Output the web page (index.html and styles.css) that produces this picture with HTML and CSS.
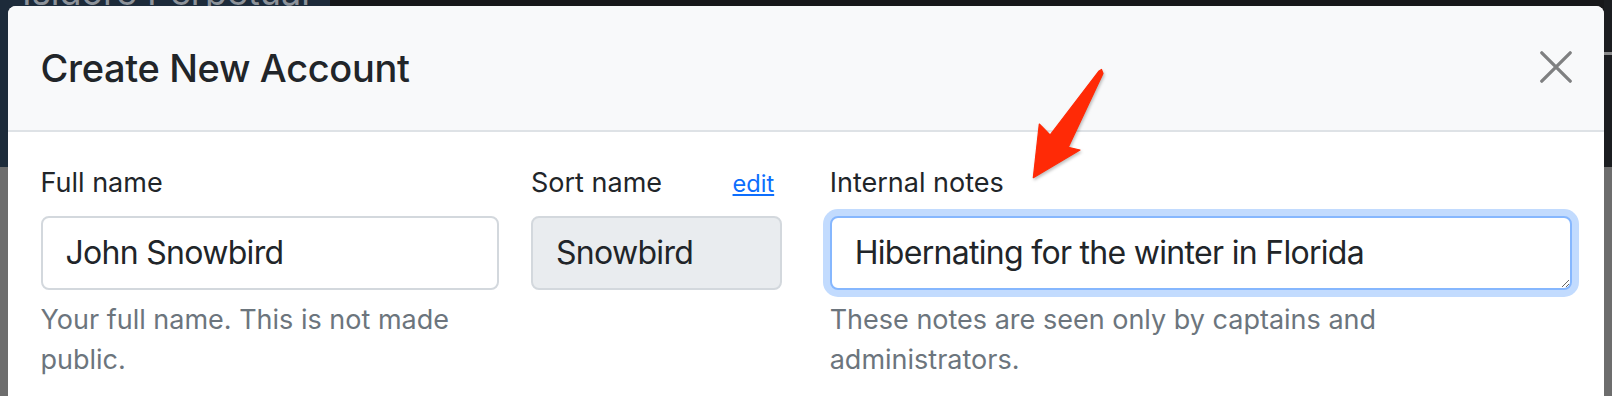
FILE: index.html
```html
<!DOCTYPE html>
<html lang="en">
<head>
<meta charset="utf-8">
<title>Create New Account</title>
<link rel="stylesheet" href="styles.css">
</head>
<body>
<div class="backdrop-text">Isidore Perpetual</div>
<div class="modal">
  <div class="modal-header">
    <h5 class="modal-title">Create New Account</h5>
    <button class="btn-close" type="button" aria-label="Close">
      <svg width="32" height="32" viewBox="0 0 32 32"><path d="M1.8 1.8 L30.2 30.2 M30.2 1.8 L1.8 30.2" stroke="#7f8081" stroke-width="3.3" stroke-linecap="round" fill="none"/></svg>
    </button>
  </div>
  <div class="modal-body">
    <div class="form-row">
      <div class="field">
        <label class="form-label" for="fullname">Full name</label>
        <input class="form-control" id="fullname" type="text" value="John Snowbird">
        <div class="form-text">Your full name. This is not made public.</div>
      </div>
      <div class="field">
        <div class="label-row">
          <label class="form-label" for="sortname">Sort name</label>
          <a class="edit-link" href="#">edit</a>
        </div>
        <input class="form-control is-readonly" id="sortname" type="text" value="Snowbird" readonly>
      </div>
      <div class="field field-notes">
        <label class="form-label" for="notes">Internal notes</label>
        <textarea class="form-control is-focused" id="notes" rows="1">Hibernating for the winter in Florida</textarea>
        <div class="form-text">These notes are seen only by captains and administrators.</div>
      </div>
    </div>
  </div>
  <svg class="annotation-arrow" width="85" height="120" viewBox="0 0 85 120">
    <polygon points="76.5,4.5 78,8.5 43.3,82.3 55,85 8.3,112.7 14.3,59 25,70 73.7,6.3" fill="#ff2a06" stroke="#ff2a06" stroke-width="1.2" stroke-linejoin="round"/>
  </svg>
</div>
</body>
</html>
```
FILE: styles.css
```css
* {
  box-sizing: border-box;
}

html,
body {
  margin: 0;
  height: 100%;
}

body {
  position: relative;
  overflow: hidden;
  padding: 6px 8px 0;
  font-family: Inter, "Liberation Sans", sans-serif;
  color: #212529;
  background:
    linear-gradient(#1d2b3a 0 167px, #6d6d6d 167px) left top / 8px 100% no-repeat,
    linear-gradient(#1b1d20 0 52px, #8a8a8a 52px 55px, #1b1d20 55px 167px, #6d6d6d 167px) right top / 8px 100% no-repeat,
    linear-gradient(90deg, #1d2b3a 0 330px, #17181a 330px);
}

.backdrop-text {
  position: absolute;
  left: 22px;
  top: -26px;
  font-size: 36px;
  line-height: 1;
  color: #8d939a;
  white-space: nowrap;
}

.modal {
  position: relative;
  min-height: 420px;
  background: #fff;
  border-radius: 8px 8px 0 0;
}

.modal-header {
  display: flex;
  align-items: center;
  justify-content: space-between;
  padding: 34px 32px 33px 32.5px;
  background: #f8f9fa;
  border-bottom: 2px solid #dee2e6;
  border-radius: 8px 8px 0 0;
}

.modal-title {
  margin: 0;
  font-size: 38px;
  font-weight: 500;
  line-height: 57px;
  letter-spacing: -0.35px;
}

.btn-close {
  display: block;
  width: 32px;
  height: 32px;
  margin-top: -3px;
  padding: 0;
  border: 0;
  background: none;
}

.btn-close svg {
  display: block;
}

.modal-body {
  padding: 31px 32px 0 32.5px;
}

.form-row {
  display: grid;
  grid-template-columns: 458.5px 250.7px 1fr;
  column-gap: 32px;
  align-items: start;
}

.field-notes {
  margin-left: 16px;
}

.form-label {
  display: block;
  margin-bottom: 12px;
  font-size: 27px;
  line-height: 40.5px;
}

.label-row {
  display: flex;
  align-items: center;
  justify-content: space-between;
  margin-bottom: 12px;
  padding-right: 7.5px;
}

.label-row .form-label {
  margin-bottom: 0;
}

.edit-link {
  font-size: 23.6px;
  line-height: 1.5;
  color: #0d6efd;
  text-decoration: underline;
}

.form-control {
  display: block;
  width: 100%;
  height: 74.5px;
  margin: 0;
  padding: 11.25px 23px;
  font-family: inherit;
  font-size: 32px;
  line-height: 48px;
  letter-spacing: -0.7px;
  color: #212529;
  background: #fff;
  border: 2px solid #d3d8dd;
  border-radius: 8px;
  outline: none;
}

.is-readonly {
  background: #e9ecef;
}

.is-focused {
  border-color: #86b7fe;
  box-shadow: 0 0 0 7px #c2dbfe;
}

textarea.form-control {
  resize: vertical;
  overflow: hidden;
}

.form-text {
  margin-top: 10px;
  font-size: 27px;
  line-height: 40px;
  color: #6c757d;
}

.annotation-arrow {
  position: absolute;
  left: 1017px;
  top: 59px;
  filter: drop-shadow(1px 2px 1.5px rgba(0, 0, 0, 0.25));
}
```
